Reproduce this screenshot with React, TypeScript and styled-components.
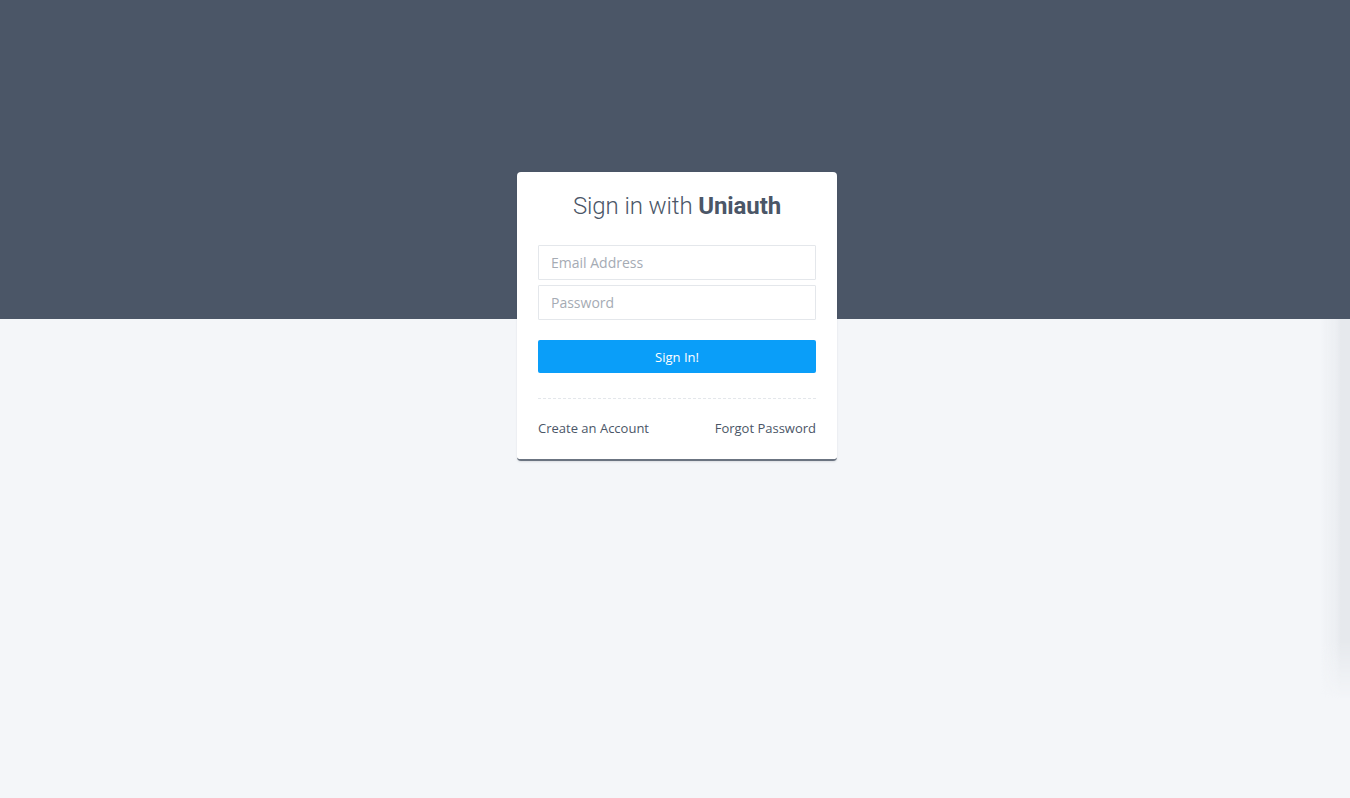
import React from "react";
import styled, { createGlobalStyle } from "styled-components";

const Global = createGlobalStyle`
  html, body { margin: 0; padding: 0; }
  body { background: #f4f6f9; font-family: "Open Sans", sans-serif; }
  * { box-sizing: border-box; }
`;

const Page = styled.div`
  position: relative;
  width: 100%;
  height: 798px;
  background: linear-gradient(to bottom, #4b5667 0, #4b5667 319px, #f4f6f9 319px);
  display: flex;
  justify-content: center;
  align-items: flex-start;
  padding-top: 172px;
  padding-left: 4px;
  overflow: hidden;
`;

const EdgeShade = styled.div`
  position: absolute;
  right: 0;
  top: 319px;
  width: 30px;
  height: 380px;
  background: linear-gradient(to right, rgba(232,235,239,0) 0, rgba(232,235,239,0.7) 55%, #e6e9ed 70%, #e6e9ed 100%);
  -webkit-mask-image: linear-gradient(to bottom, #000 85%, transparent 100%);
  mask-image: linear-gradient(to bottom, #000 85%, transparent 100%);
`;

const Card = styled.div`
  width: 320px;
  background: #ffffff;
  border-radius: 4px;
  border-bottom: 2px solid #6b7481;
  box-shadow: 0 1px 2px rgba(40, 50, 65, 0.12);
  padding: 18px 21px 22px;
  display: flex;
  flex-direction: column;
`;

const Title = styled.h1`
  margin: 0 0 23px;
  font-family: Roboto, "Liberation Sans", sans-serif;
  font-weight: 300;
  font-size: 24px;
  line-height: 32px;
  color: #4b5667;
  text-align: center;
  letter-spacing: -0.1px;
  b { font-weight: 700; }
`;

const Fields = styled.div`
  display: flex;
  flex-direction: column;
  gap: 5px;
`;

const Input = styled.input`
  width: 100%;
  height: 35px;
  border: 1px solid #e4e7eb;
  border-radius: 1px;
  padding: 0 12px;
  font-family: "Open Sans", sans-serif;
  font-size: 14px;
  color: #4b5667;
  outline: none;
  &::placeholder { color: #a5abb4; }
`;

const Button = styled.button`
  margin-top: 20px;
  height: 33px;
  width: 100%;
  border: none;
  border-radius: 2px;
  background: #0a9ef9;
  color: #ffffff;
  font-family: "Open Sans", sans-serif;
  font-size: 13px;
  cursor: pointer;
`;

const Divider = styled.hr`
  margin: 25px 0 0;
  border: none;
  border-top: 1px dashed #e4e7eb;
`;

const Links = styled.div`
  margin-top: 20px;
  display: flex;
  justify-content: space-between;
  align-items: center;
`;

const Link = styled.a`
  font-family: "Open Sans", sans-serif;
  font-size: 13px;
  line-height: 18px;
  color: #4b5667;
  text-decoration: none;
`;

export default function App() {
  return (
    <>
      <Global />
      <Page>
        <Card>
          <Title>
            Sign in with <b>Uniauth</b>
          </Title>
          <Fields>
            <Input type="email" placeholder="Email Address" />
            <Input type="password" placeholder="Password" />
          </Fields>
          <Button>Sign In!</Button>
          <Divider />
          <Links>
            <Link href="#">Create an Account</Link>
            <Link href="#">Forgot Password</Link>
          </Links>
        </Card>
        <EdgeShade />
      </Page>
    </>
  );
}
